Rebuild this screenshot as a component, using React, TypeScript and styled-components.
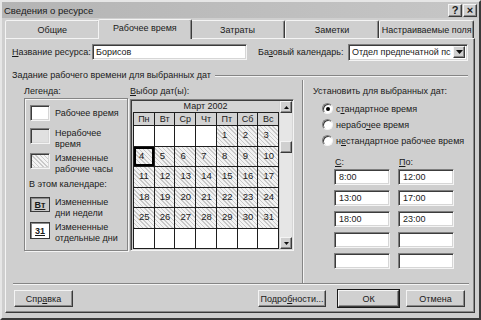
import styled, { createGlobalStyle } from 'styled-components';

const GlobalStyle = createGlobalStyle`
  html, body { margin: 0; padding: 0; background: #cfcfcf; }
  body {
    font-family: "Liberation Sans", Arial, sans-serif;
    font-size: 9px;
    color: #1a1a1a;
  }
  * { box-sizing: border-box; }
`;

const raised = `
  border: 1px solid;
  border-color: #f4f4f4 #3a3a3a #3a3a3a #f4f4f4;
  box-shadow: inset -1px -1px #8a8a8a;
  background: #d0d0d0;
`;

const sunken = `
  border: 1px solid;
  border-color: #7e7e7e #f4f4f4 #f4f4f4 #7e7e7e;
  box-shadow: inset 1px 1px #3c3c3c, inset -1px -1px #d6d6d6;
`;

const hatch = `repeating-linear-gradient(45deg, #c9c9c9 0 1px, #f3f3f3 1px 3px)`;

const days: (number | null)[][] = [
  [null, null, null, null, 1, 2, 3],
  [4, 5, 6, 7, 8, 9, 10],
  [11, 12, 13, 14, 15, 16, 17],
  [18, 19, 20, 21, 22, 23, 24],
  [25, 26, 27, 28, 29, 30, 31],
  [null, null, null, null, null, null, null],
];

const weekDays = ['Пн', 'Вт', 'Ср', 'Чт', 'Пт', 'Сб', 'Вс'];

const times = [
  ['8:00', '12:00'],
  ['13:00', '17:00'],
  ['18:00', '23:00'],
  ['', ''],
  ['', ''],
];

export default function App() {
  return (
    <>
      <GlobalStyle />
      <Window>
        <TitleBar>
          <span>Сведения о ресурсе</span>
          <TitleButtons>
            <TitleButton>?</TitleButton>
            <TitleButton>×</TitleButton>
          </TitleButtons>
        </TitleBar>

        <TabStrip>
          <Tab>Общие</Tab>
          <Tab $active>Рабочее время</Tab>
          <Tab>Затраты</Tab>
          <Tab>Заметки</Tab>
          <Tab>Настраиваемые поля</Tab>
        </TabStrip>

        <Panel>
          <ResourceRow>
            <FieldLabel $width={80}><u>Н</u>азвание ресурса:</FieldLabel>
            <TextBox $width={155}>Борисов</TextBox>
            <FieldLabel $width={90} style={{ marginLeft: 11 }}>Ба<u>з</u>овый календарь:</FieldLabel>
            <Select>
              <SelectText>Отдел предпечатной пс</SelectText>
              <DropButton>
                <svg width="7" height="4" viewBox="0 0 7 4"><path d="M0 0h7L3.5 4z" fill="#111" /></svg>
              </DropButton>
            </Select>
          </ResourceRow>

          <GroupHeader>
            <span>Задание рабочего времени для выбранных дат</span>
            <Etch />
          </GroupHeader>

          <Columns>
            <LegendCol>
              <SmallLabel>Легенда:</SmallLabel>
              <LegendBox>
                <LegendItem $h={23} $center>
                  <Swatch $bg="#ffffff" />
                  <LegendText>Рабочее время</LegendText>
                </LegendItem>
                <LegendItem $h={25}>
                  <Swatch $bg="#e0e0e0" />
                  <LegendText>Нерабочее<br />время</LegendText>
                </LegendItem>
                <LegendItem $h={26}>
                  <Swatch $bg={hatch} />
                  <LegendText>Измененные<br />рабочие часы</LegendText>
                </LegendItem>
                <LegendNote>В этом календаре:</LegendNote>
                <LegendItem $h={25}>
                  <DayBadge $white={false}>Вт</DayBadge>
                  <LegendText>Измененные<br />дни недели</LegendText>
                </LegendItem>
                <LegendItem $h={20}>
                  <DayBadge $white>31</DayBadge>
                  <LegendText>Измененные<br />отдельные дни</LegendText>
                </LegendItem>
              </LegendBox>
            </LegendCol>

            <CalendarCol>
              <SmallLabel><u>В</u>ыбор дат(ы):</SmallLabel>
              <CalFrame>
                <CalBody>
                  <MonthHeader>Март 2002</MonthHeader>
                  <CalGrid>
                    {weekDays.map((d) => (
                      <WeekDay key={d}>{d}</WeekDay>
                    ))}
                    {days.flat().map((d, i) => (
                      <DayCell key={i} $hatched={d !== null} $selected={d === 4}>
                        {d}
                      </DayCell>
                    ))}
                  </CalGrid>
                </CalBody>
                <ScrollBar>
                  <ScrollButton>
                    <svg width="5" height="3" viewBox="0 0 5 3"><path d="M0 3h5L2.5 0z" fill="#111" /></svg>
                  </ScrollButton>
                  <ScrollTrack>
                    <Thumb />
                  </ScrollTrack>
                  <ScrollButton>
                    <svg width="5" height="3" viewBox="0 0 5 3"><path d="M0 0h5L2.5 3z" fill="#111" /></svg>
                  </ScrollButton>
                </ScrollBar>
              </CalFrame>
            </CalendarCol>

            <Divider />

            <RightCol>
              <SmallLabel>Установить для выбранных дат:</SmallLabel>
              <Radios>
                <RadioRow>
                  <Radio $checked />
                  <span>с<u>т</u>андартное время</span>
                </RadioRow>
                <RadioRow>
                  <Radio $checked={false} />
                  <span>нерабо<u>ч</u>ее время</span>
                </RadioRow>
                <RadioRow>
                  <Radio $checked={false} />
                  <span>н<u>е</u>стандартное рабочее время</span>
                </RadioRow>
              </Radios>
              <TimeGrid>
                <TimeHead><u>С</u>:</TimeHead>
                <TimeHead><u>П</u>о:</TimeHead>
                {times.flat().map((t, i) => (
                  <TimeBox key={i}>{t}</TimeBox>
                ))}
              </TimeGrid>
            </RightCol>
          </Columns>

          <Separator />

          <ButtonRow>
            <DlgButton $width={59}><span>Спр<u>а</u>вка</span></DlgButton>
            <DlgButton $width={68} style={{ marginLeft: 'auto' }}><span>Подро<u>б</u>ности...</span></DlgButton>
            <DlgButton $width={61} $default style={{ marginLeft: 12 }}><span>ОК</span></DlgButton>
            <DlgButton $width={59} style={{ marginLeft: 7 }}><span>Отмена</span></DlgButton>
          </ButtonRow>
        </Panel>
      </Window>
    </>
  );
}

const Window = styled.div`
  width: 481px;
  height: 320px;
  background: #cfcfcf;
  border: 2px solid;
  border-color: #e6e6e6 #3a3a3a #3a3a3a #e6e6e6;
  display: flex;
  flex-direction: column;
`;

const TitleBar = styled.div`
  height: 16px;
  display: flex;
  align-items: center;
  justify-content: space-between;
  padding: 0 2px 0 2px;
  background: linear-gradient(90deg, #b4b4b4, #c6c6c6);
  font-size: 9.5px;
`;

const TitleButtons = styled.div`
  display: flex;
  gap: 1px;
`;

const TitleButton = styled.div`
  ${raised}
  width: 14px;
  height: 13px;
  display: grid;
  place-items: center;
  font-weight: bold;
  font-size: 11px;
  line-height: 1;
`;

const TabStrip = styled.div`
  display: flex;
  align-items: flex-end;
  height: 20px;
  margin: 0 5px 0 3px;
  position: relative;
  z-index: 1;
`;

const Tab = styled.div<{ $active?: boolean }>`
  flex: 1;
  height: ${(p) => (p.$active ? '20px' : '18px')};
  margin: ${(p) => (p.$active ? '0 -2px -1px' : '0')};
  padding-bottom: ${(p) => (p.$active ? '3px' : '0')};
  border: 1px solid;
  border-bottom: none;
  border-color: #f4f4f4 #3a3a3a transparent #f4f4f4;
  border-radius: 2px 2px 0 0;
  box-shadow: inset -1px 0 #8a8a8a;
  background: #cfcfcf;
  display: flex;
  align-items: center;
  justify-content: center;
  white-space: nowrap;
  position: relative;
  z-index: ${(p) => (p.$active ? 2 : 0)};
`;

const Panel = styled.div`
  width: 470px;
  height: 275px;
  margin-left: 3px;
  padding: 5px 6px 5px 6px;
  border: 1px solid;
  border-color: #f4f4f4 #3a3a3a #3a3a3a #f4f4f4;
  box-shadow: inset -1px -1px #8a8a8a;
  display: flex;
  flex-direction: column;
`;

const ResourceRow = styled.div`
  display: flex;
  align-items: center;
  height: 16px;
`;

const FieldLabel = styled.div<{ $width: number }>`
  width: ${(p) => p.$width}px;
  white-space: nowrap;
`;

const TextBox = styled.div<{ $width: number }>`
  ${sunken}
  width: ${(p) => p.$width}px;
  height: 16px;
  background: #fff;
  padding: 0 3px;
  display: flex;
  align-items: center;
`;

const Select = styled.div`
  ${sunken}
  width: 120px;
  height: 17px;
  background: #fff;
  display: flex;
  align-items: center;
  padding: 2px 2px 2px 3px;
`;

const SelectText = styled.div`
  flex: 1;
  overflow: hidden;
  white-space: nowrap;
`;

const DropButton = styled.div`
  ${raised}
  width: 12px;
  height: 12px;
  display: grid;
  place-items: center;
`;

const GroupHeader = styled.div`
  display: flex;
  align-items: center;
  height: 12px;
  margin-top: 9px;
  white-space: nowrap;
`;

const Etch = styled.div`
  flex: 1;
  margin: 1px 0 0 4px;
  border-top: 1px solid #858585;
  border-bottom: 1px solid #f4f4f4;
`;

const Columns = styled.div`
  display: flex;
  height: 202px;
`;

const SmallLabel = styled.div`
  height: 11px;
  margin-top: 5px;
  line-height: 11px;
  white-space: nowrap;
`;

const LegendCol = styled.div`
  width: 104px;
  margin-left: 12px;
  display: flex;
  flex-direction: column;
`;

const LegendBox = styled.div`
  height: 153px;
  margin-top: 1px;
  border: 1px solid #858585;
  box-shadow: 1px 1px #f4f4f4, inset 1px 1px #f4f4f4;
  padding: 6px 4px 0 5px;
  display: flex;
  flex-direction: column;
`;

const LegendItem = styled.div<{ $h: number; $center?: boolean }>`
  height: ${(p) => p.$h}px;
  flex: none;
  display: flex;
  align-items: flex-start;
  gap: 5px;
  & > div:last-child {
    padding-top: ${(p) => (p.$center ? '3px' : '0')};
  }
`;

const Swatch = styled.div<{ $bg: string }>`
  ${sunken}
  width: 20px;
  height: 16px;
  flex: none;
  background: ${(p) => p.$bg};
`;

const LegendText = styled.div`
  line-height: 11px;
  white-space: nowrap;
`;

const LegendNote = styled.div`
  height: 18px;
  flex: none;
  margin-left: -1px;
  white-space: nowrap;
`;

const DayBadge = styled.div<{ $white: boolean }>`
  width: 20px;
  height: ${(p) => (p.$white ? '17px' : '15px')};
  flex: none;
  border: 1px solid #3a3a3a;
  box-shadow: inset 1px 1px #8a8a8a;
  background: ${(p) => (p.$white ? '#fff' : '#c9c9c9')};
  display: grid;
  place-items: center;
  font-weight: bold;
  text-decoration: underline;
`;

const CalendarCol = styled.div`
  width: 164px;
  margin-left: 2px;
  display: flex;
  flex-direction: column;
`;

const CalFrame = styled.div`
  ${sunken}
  margin-top: 2px;
  height: 152px;
  display: flex;
  background: #d0d0d0;
  padding: 1px;
`;

const CalBody = styled.div`
  width: 149px;
  display: flex;
  flex-direction: column;
`;

const MonthHeader = styled.div`
  height: 11px;
  line-height: 11px;
  text-align: center;
  background: #d4d4d4;
`;

const CalGrid = styled.div`
  flex: 1;
  margin-left: 1px;
  display: grid;
  grid-template-columns: repeat(7, 1fr);
  grid-template-rows: 12px repeat(6, 1fr);
  gap: 1px;
  padding: 1px;
  background: #1e1e1e;
`;

const WeekDay = styled.div`
  background: #d2d2d2;
  display: grid;
  place-items: center;
`;

const DayCell = styled.div<{ $hatched: boolean; $selected: boolean }>`
  background: ${(p) => (p.$hatched ? hatch : '#fff')};
  padding: 3px 0 0 5px;
  font-size: 9.5px;
  line-height: 11px;
  box-shadow: ${(p) => (p.$selected ? 'inset 0 0 0 2px #000' : 'none')};
`;

const ScrollBar = styled.div`
  width: 12px;
  margin-left: 1px;
  display: flex;
  flex-direction: column;
`;

const ScrollButton = styled.div`
  ${raised}
  height: 12px;
  display: grid;
  place-items: center;
`;

const ScrollTrack = styled.div`
  flex: 1;
  background: #e6e6e6;
  padding-top: 28px;
`;

const Thumb = styled.div`
  ${raised}
  height: 12px;
`;

const Divider = styled.div`
  margin: -1px 0 0 8px;
  border-left: 1px solid #858585;
  border-right: 1px solid #f4f4f4;
`;

const RightCol = styled.div`
  margin-left: 9px;
  display: flex;
  flex-direction: column;
`;

const Radios = styled.div`
  margin: 5px 0 0 9px;
  display: flex;
  flex-direction: column;
  gap: 3px;
`;

const RadioRow = styled.div`
  display: flex;
  align-items: center;
  gap: 3px;
  height: 13px;
  white-space: nowrap;
`;

const Radio = styled.div<{ $checked: boolean }>`
  width: 11px;
  height: 11px;
  border-radius: 50%;
  border: 1px solid;
  border-color: #7e7e7e #f4f4f4 #f4f4f4 #7e7e7e;
  box-shadow: inset 1px 1px #3c3c3c;
  background: #fff;
  display: grid;
  place-items: center;
  &::after {
    content: '';
    width: 4px;
    height: 4px;
    border-radius: 50%;
    background: ${(p) => (p.$checked ? '#000' : 'transparent')};
  }
`;

const TimeGrid = styled.div`
  margin: 10px 0 0 21px;
  display: grid;
  grid-template-columns: 56px 56px;
  column-gap: 8px;
  row-gap: 5px;
`;

const TimeHead = styled.div`
  height: 11px;
  line-height: 11px;
  margin-bottom: -4px;
  padding-left: 1px;
`;

const TimeBox = styled.div`
  ${sunken}
  height: 16px;
  background: #fff;
  padding: 0 4px;
  display: flex;
  align-items: center;
`;

const Separator = styled.div`
  margin: 0 -1px 0 1px;
  border-top: 1px solid #858585;
  border-bottom: 1px solid #f4f4f4;
`;

const ButtonRow = styled.div`
  display: flex;
  margin: 5px 3px 0 2px;
  height: 17px;
`;

const DlgButton = styled.div<{ $width: number; $default?: boolean }>`
  ${raised}
  width: ${(p) => p.$width}px;
  height: 17px;
  display: flex;
  align-items: center;
  justify-content: center;
  white-space: nowrap;
  ${(p) => (p.$default ? 'outline: 1px solid #1a1a1a; outline-offset: 0;' : '')}
`;
